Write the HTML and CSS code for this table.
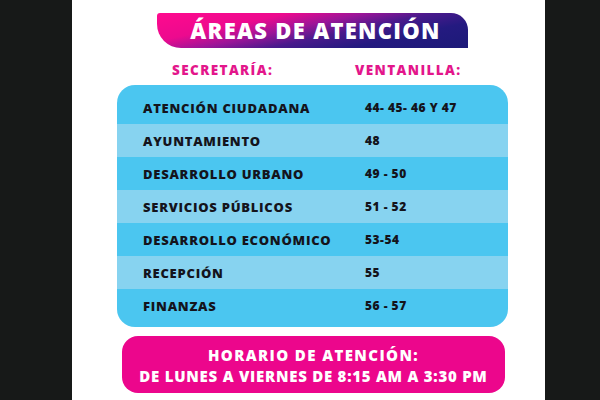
FILE: index.html
```html
<!DOCTYPE html>
<html lang="es">
<head>
<meta charset="utf-8">
<title>Áreas de atención</title>
<link rel="stylesheet" href="styles.css">
</head>
<body>
<div class="page">
  <div class="side side-left"></div>
  <main class="main">
    <h1 class="banner">ÁREAS DE ATENCIÓN</h1>
    <div class="heads">
      <span class="head head-sec">SECRETARÍA:</span>
      <span class="head head-ven">VENTANILLA:</span>
    </div>
    <div class="table">
      <div class="row"><span class="name">ATENCIÓN CIUDADANA</span><span class="num">44- 45- 46 Y 47</span></div>
      <div class="row light"><span class="name">AYUNTAMIENTO</span><span class="num">48</span></div>
      <div class="row"><span class="name">DESARROLLO URBANO</span><span class="num">49 - 50</span></div>
      <div class="row light"><span class="name">SERVICIOS PÚBLICOS</span><span class="num">51 - 52</span></div>
      <div class="row"><span class="name">DESARROLLO ECONÓMICO</span><span class="num">53-54</span></div>
      <div class="row light"><span class="name">RECEPCIÓN</span><span class="num">55</span></div>
      <div class="row"><span class="name">FINANZAS</span><span class="num">56 - 57</span></div>
    </div>
    <div class="hours">
      <p class="hours-line">HORARIO DE ATENCIÓN:</p>
      <p class="hours-line">DE LUNES A VIERNES DE 8:15 AM A 3:30 PM</p>
    </div>
  </main>
  <div class="side side-right"></div>
</div>
</body>
</html>
```

FILE: styles.css
```css
* { box-sizing: border-box; }
html, body { margin: 0; padding: 0; }
body {
  width: 600px;
  height: 400px;
  overflow: hidden;
  font-family: "Open Sans", "DejaVu Sans", sans-serif;
  font-weight: 800;
}
.page {
  display: flex;
  width: 600px;
  height: 400px;
}
.side { background: #171918; }
.side-left { width: 72px; }
.side-right { width: 55px; }
.main {
  flex: 1;
  background: #ffffff;
  padding-top: 13px;
  display: flex;
  flex-direction: column;
}
.banner {
  margin: 0 0 0 85px;
  width: 311px;
  height: 35px;
  border-radius: 3px 17px 0 24px;
  background: linear-gradient(168deg, #ff0a8e 0%, #ec0a8e 28%, #9a1598 44%, #4a1a8c 58%, #241a80 75%, #1c1a78 100%);
  color: #ffffff;
  font-size: 22px;
  font-weight: 800;
  line-height: 35px;
  text-align: center;
  padding-left: 6px;
  letter-spacing: 1.3px;
}
.heads {
  display: flex;
  margin: 14px 0 0 100px;
  height: 16px;
  line-height: 16px;
}
.head {
  color: #e3168b;
  font-size: 13.5px;
  letter-spacing: 1.4px;
}
.head-sec { width: 183px; }
.table {
  margin: 7px 0 0 45px;
  width: 391px;
  background: #4bc6f0;
  border-radius: 18px;
  padding: 6px 0 5px;
  overflow: hidden;
}
.row {
  display: grid;
  grid-template-columns: 222px 1fr;
  padding-left: 26px;
  height: 33px;
  align-items: center;
  color: #14141c;
  font-size: 13px;
  letter-spacing: 0.75px;
}
.row.light { background: #87d3f0; }
.row:first-child { padding-top: 6px; margin-top: -6px; height: 39px; }
.num { font-size: 12px; letter-spacing: 0.5px; }
.hours {
  margin: 9px 0 0 50px;
  width: 383px;
  height: 57px;
  background: #ec068c;
  border-radius: 16px;
  color: #ffffff;
  text-align: center;
  padding-top: 9px;
}
.hours-line {
  margin: 0;
  font-size: 15px;
  line-height: 21px;
  letter-spacing: 0.75px;
}
.hours-line:first-child { letter-spacing: 1.4px; }
```
